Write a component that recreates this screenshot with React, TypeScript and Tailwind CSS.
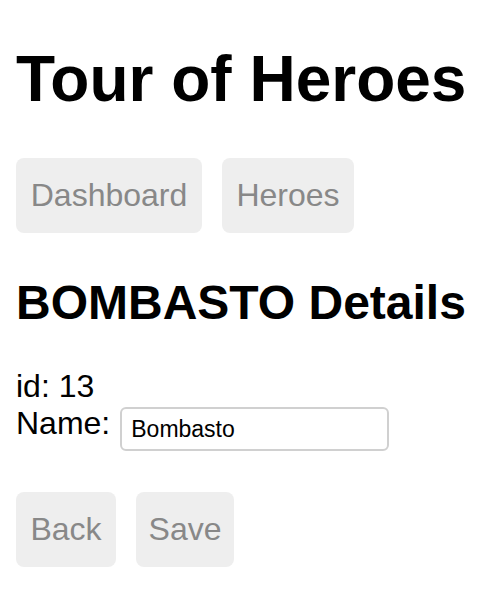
import { useState } from "react";

const navLinks = [
  { label: "Dashboard", width: "w-[186px]" },
  { label: "Heroes", width: "w-[132px]" },
];

const NavButton = ({ label, width }: { label: string; width: string }) => (
  <button
    className={`flex h-[75px] ${width} items-center justify-center rounded-[8px] bg-[#eeeeee] text-[32px] leading-[37px] text-[#888888]`}
  >
    {label}
  </button>
);

const App = () => {
  const [name, setName] = useState("Bombasto");

  return (
    <div className="min-h-[594px] bg-white px-4 pt-[42px] font-['Liberation_Sans',Arial,sans-serif] text-black">
      {/* Title */}
      <h1 className="text-[64px] font-bold leading-[74px]">Tour of Heroes</h1>

      {/* Nav */}
      <nav className="mt-[42px] flex gap-5">
        {navLinks.map((link) => (
          <NavButton key={link.label} label={link.label} width={link.width} />
        ))}
      </nav>

      {/* Hero detail */}
      <h2 className="mt-[42px] text-[48px] font-bold leading-[55px]">
        {name.toUpperCase()} Details
      </h2>

      <div className="mt-[38px] text-[32px] leading-[37px]">id: 13</div>
      <div className="flex items-start gap-[10px] text-[32px] leading-[37px]">
        <label htmlFor="hero-name">Name:</label>
        <input
          id="hero-name"
          value={name}
          onChange={(e) => setName(e.target.value)}
          className="mt-[2px] h-[44px] w-[269px] rounded-[6px] border-2 border-[#d0d0d0] pl-[9px] text-[23px] leading-[26px] text-black outline-none"
        />
      </div>

      <div className="mt-[41px] flex gap-5">
        <NavButton label="Back" width="w-[100px]" />
        <NavButton label="Save" width="w-[98px]" />
      </div>
    </div>
  );
};

export default App;
